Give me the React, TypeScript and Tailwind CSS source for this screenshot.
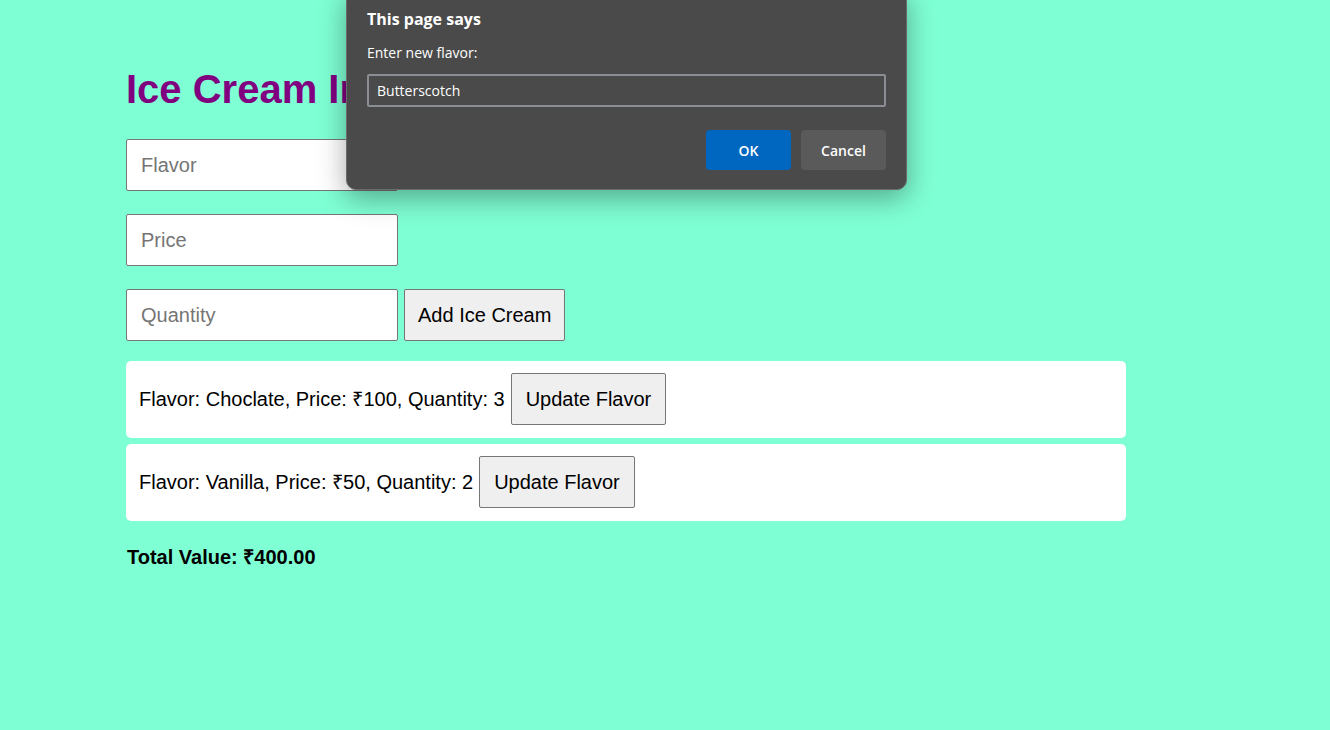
const items = [
  { flavor: "Choclate", price: 100, quantity: 3 },
  { flavor: "Vanilla", price: 50, quantity: 2 },
];

const App = () => {
  const total = items.reduce((sum, i) => sum + i.price * i.quantity, 0);

  return (
    <main className="relative min-h-[730px] w-full bg-[#7fffd4] font-['Liberation_Sans',Arial,sans-serif] text-black overflow-hidden">
      <div className="ml-[126px] w-[1000px] pt-[66px]">
        <h1 className="text-[40px] leading-[46px] font-bold text-[#800080]">Ice Cream Inventory</h1>

        <div className="mt-[27px] flex flex-col gap-[23px]">
          <input placeholder="Flavor" className="w-[272px] h-[52px] border border-[#767676] bg-white px-[14px] text-[20px] rounded-[2px] placeholder:text-[#757575] outline-none" />
          <input placeholder="Price" className="w-[272px] h-[52px] border border-[#767676] bg-white px-[14px] text-[20px] rounded-[2px] placeholder:text-[#757575] outline-none" />
          <div className="flex gap-[6px]">
            <input placeholder="Quantity" className="w-[272px] h-[52px] border border-[#767676] bg-white px-[14px] text-[20px] rounded-[2px] placeholder:text-[#757575] outline-none" />
            <button className="h-[52px] px-[13px] border border-[#767676] bg-[#efefef] text-[20px] rounded-[2px]">Add Ice Cream</button>
          </div>
        </div>

        <ul className="mt-[20px] flex flex-col gap-[6px]">
          {items.map((item) => (
            <li key={item.flavor} className="flex items-center gap-[6px] bg-white rounded-[5px] px-[13px] pt-[12px] pb-[13px] text-[20px]">
              <span>
                Flavor: {item.flavor}, Price: ₹{item.price}, Quantity: {item.quantity}
              </span>
              <button className="h-[52px] px-[14px] border border-[#767676] bg-[#efefef] text-[20px] rounded-[2px]">Update Flavor</button>
            </li>
          ))}
        </ul>

        <p className="mt-[21px] ml-[1px] text-[20px] font-bold">Total Value: ₹{total.toFixed(2)}</p>
      </div>

      {/* browser prompt() dialog */}
      <div className="absolute left-[346px] top-[-12px] w-[561px] h-[202px] bg-[#4a4a4a] border border-[#6b6b6b] rounded-[10px] shadow-[0_8px_28px_rgba(0,0,0,0.35)] font-['Open_Sans','Noto_Sans',sans-serif] text-white">
        <div className="px-[20px] pt-[18px]">
          <div className="text-[16px] leading-[24px] font-bold">This page says</div>
          <div className="mt-[12px] text-[14px] leading-[20px]">Enter new flavor:</div>
          <div className="mt-[11px] h-[33px] border-2 border-[#8a8d93] rounded-[2px] flex items-center px-[8px] text-[14px]">Butterscotch</div>
          <div className="mt-[23px] flex justify-end gap-[10px]">
            <button className="w-[85px] h-[40px] rounded-[4px] bg-[#0067c0] text-[14px] font-semibold">OK</button>
            <button className="w-[85px] h-[40px] rounded-[4px] bg-[#5a5a5a] text-[14px] font-semibold">Cancel</button>
          </div>
        </div>
      </div>
    </main>
  );
};

export default App;
